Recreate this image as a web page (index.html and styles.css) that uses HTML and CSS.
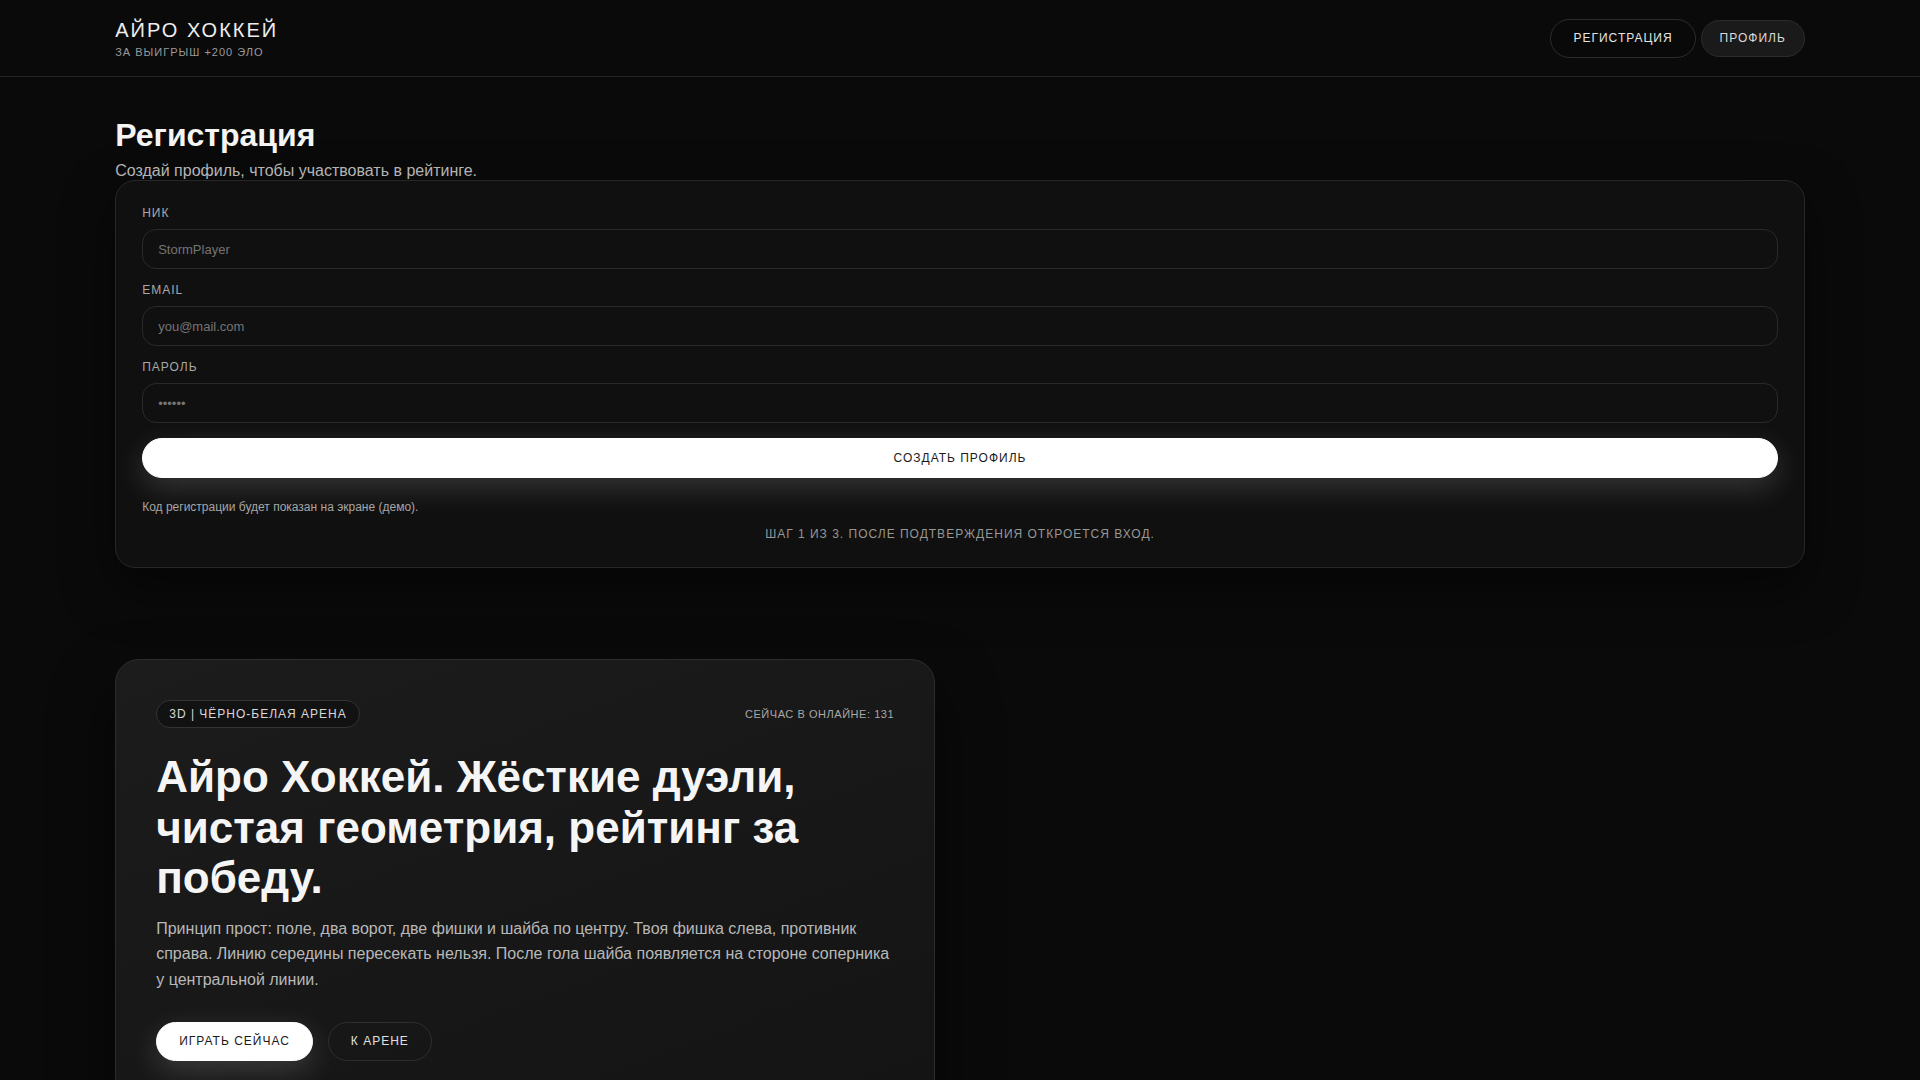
FILE: index.html
```html
<!DOCTYPE html>
<html lang="ru">
<head>
<meta charset="utf-8">
<title>Айро Хоккей — Регистрация</title>
<link rel="stylesheet" href="styles.css">
</head>
<body>
<header class="topbar">
  <div class="wrap topbar-inner">
    <div class="brand">
      <div class="brand-title">АЙРО ХОККЕЙ</div>
      <div class="brand-sub">ЗА ВЫИГРЫШ +200 ЭЛО</div>
    </div>
    <nav class="nav">
      <a class="nav-btn nav-btn-outline" href="#">РЕГИСТРАЦИЯ</a>
      <a class="nav-btn nav-btn-soft" href="#">ПРОФИЛЬ</a>
    </nav>
  </div>
</header>
<main class="wrap main">
  <section class="reg">
    <h1 class="reg-title">Регистрация</h1>
    <p class="reg-sub">Создай профиль, чтобы участвовать в рейтинге.</p>
    <form class="reg-card">
      <div class="field">
        <label class="field-label">НИК</label>
        <input class="field-input" type="text" placeholder="StormPlayer">
      </div>
      <div class="field">
        <label class="field-label">EMAIL</label>
        <input class="field-input" type="email" placeholder="you@mail.com">
      </div>
      <div class="field">
        <label class="field-label">ПАРОЛЬ</label>
        <input class="field-input" type="password" placeholder="••••••">
      </div>
      <button class="btn-primary btn-wide" type="button">СОЗДАТЬ ПРОФИЛЬ</button>
      <p class="hint">Код регистрации будет показан на экране (демо).</p>
      <p class="step">ШАГ 1 ИЗ 3. ПОСЛЕ ПОДТВЕРЖДЕНИЯ ОТКРОЕТСЯ ВХОД.</p>
    </form>
  </section>
  <section class="hero">
    <div class="hero-top">
      <span class="pill">3D | ЧЁРНО-БЕЛАЯ АРЕНА</span>
      <span class="online">СЕЙЧАС В ОНЛАЙНЕ: 131</span>
    </div>
    <h2 class="hero-title">Айро Хоккей. Жёсткие дуэли, чистая геометрия, рейтинг за победу.</h2>
    <p class="hero-text">Принцип прост: поле, два ворот, две фишки и шайба по центру. Твоя фишка слева, противник справа. Линию середины пересекать нельзя. После гола шайба появляется на стороне соперника у центральной линии.</p>
    <div class="hero-actions">
      <a class="btn-primary btn-pill" href="#">ИГРАТЬ СЕЙЧАС</a>
      <a class="btn-ghost btn-pill" href="#">К АРЕНЕ</a>
    </div>
  </section>
</main>
</body>
</html>
```
FILE: styles.css
```css
* { box-sizing: border-box; }
html, body { margin: 0; padding: 0; }
body {
  background: #0a0a0a;
  color: #f2f2f2;
  font-family: "Liberation Sans", Arial, sans-serif;
  min-height: 1080px;
  overflow: hidden;
}
.wrap { width: 88%; margin: 0 auto; }

.topbar {
  height: 77px;
  border-bottom: 1px solid #262626;
  background: #0a0a0a;
}
.topbar-inner {
  height: 76px;
  display: flex;
  align-items: center;
  justify-content: space-between;
}
.brand-title {
  font-size: 20px;
  line-height: 24px;
  letter-spacing: 2px;
  color: #ededed;
}
.brand-sub {
  margin-top: 3px;
  font-size: 11px;
  line-height: 14px;
  letter-spacing: 1px;
  color: #9a9a9a;
}
.nav { display: flex; align-items: center; gap: 5px; }
.nav-btn {
  display: inline-flex;
  align-items: center;
  border-radius: 999px;
  font-size: 12px;
  letter-spacing: 1px;
  color: #e4e4e4;
  text-decoration: none;
  border: 1px solid #2c2c2c;
}
.nav-btn-outline { height: 39px; padding: 0 22px; background: #090909; }
.nav-btn-soft { height: 37px; padding: 0 18px; background: #1a1a1a; color: #dadada; }

.main { padding-top: 39px; }
.reg-title {
  margin: 0;
  font-size: 32px;
  line-height: 38px;
  font-weight: 700;
  color: #f4f4f4;
}
.reg-sub {
  margin: 7px 0 0;
  font-size: 16px;
  line-height: 19px;
  color: #b4b4b4;
}
.reg-card {
  background: #101010;
  border: 1px solid #272727;
  border-radius: 20px;
  padding: 24px 26px 25px;
  box-shadow: 0 20px 50px rgba(0, 0, 0, 0.5);
}
.field + .field { margin-top: 13px; }
.field-label {
  display: block;
  font-size: 12px;
  line-height: 16px;
  letter-spacing: 1px;
  color: #a8a8a8;
  margin-bottom: 8px;
}
.field-input {
  display: block;
  width: 100%;
  height: 40px;
  padding: 0 15px;
  background: #101010;
  border: 1px solid #2a2a2a;
  border-radius: 14px;
  font-family: "Liberation Sans", Arial, sans-serif;
  font-size: 13px;
  color: #dddddd;
  outline: none;
}
.field-input::placeholder { color: #747474; }

.btn-primary {
  display: inline-flex;
  align-items: center;
  justify-content: center;
  background: #ffffff;
  color: #1a1a1a;
  border: 1px solid #ffffff;
  border-radius: 999px;
  font-family: "Liberation Sans", Arial, sans-serif;
  font-size: 12px;
  letter-spacing: 1px;
  text-decoration: none;
  box-shadow: 0 10px 30px rgba(255, 255, 255, 0.16);
}
.btn-wide {
  width: 100%;
  height: 40px;
  margin-top: 15px;
}
.hint {
  margin: 21px 0 0;
  font-size: 12px;
  line-height: 16px;
  color: #a6a6a6;
}
.step {
  margin: 11px 0 0;
  text-align: center;
  font-size: 12px;
  line-height: 16px;
  letter-spacing: 1px;
  color: #979797;
}

.hero {
  width: 820px;
  margin-top: 91px;
  padding: 40px 40px 40px;
  border: 1px solid #2c2c2c;
  border-radius: 24px;
  background: linear-gradient(160deg, #1c1c1c 0%, #171717 60%, #141414 100%);
  box-shadow: 0 30px 60px rgba(0, 0, 0, 0.6);
}
.hero-top {
  display: flex;
  align-items: center;
  justify-content: space-between;
}
.pill {
  display: inline-block;
  padding: 5px 12px;
  line-height: 16px;
  font-size: 12px;
  letter-spacing: 1px;
  color: #d8d8d8;
  border: 1px solid #333333;
  border-radius: 999px;
  background: #121212;
}
.online {
  font-size: 11px;
  letter-spacing: 0.55px;
  color: #a8a8a8;
}
.hero-title {
  margin: 24px 0 0;
  font-size: 44px;
  line-height: 50.6px;
  font-weight: 700;
  color: #f5f5f5;
}
.hero-text {
  margin: 12px 0 0;
  font-size: 16px;
  line-height: 25.6px;
  color: #b8b8b8;
}
.hero-actions {
  display: flex;
  gap: 15px;
  margin-top: 29px;
}
.btn-pill { height: 39px; padding: 0 22px; }
.btn-ghost {
  display: inline-flex;
  align-items: center;
  justify-content: center;
  border: 1px solid #2e2e2e;
  border-radius: 999px;
  background: transparent;
  color: #e0e0e0;
  font-size: 12px;
  letter-spacing: 1px;
  text-decoration: none;
}
```
